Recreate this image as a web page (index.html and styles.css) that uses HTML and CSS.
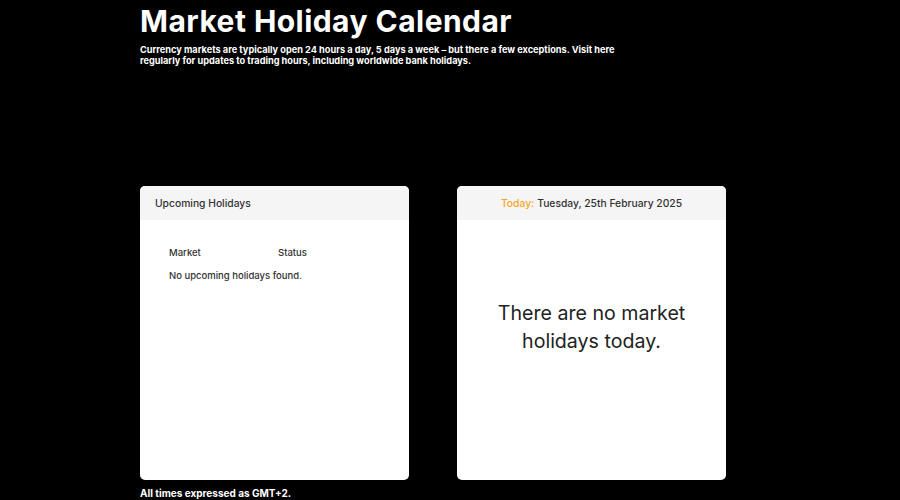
FILE: index.html
```html
<!DOCTYPE html>
<html lang="en">
<head>
<meta charset="utf-8">
<title>Market Holiday Calendar</title>
<link rel="stylesheet" href="styles.css">
</head>
<body>
<main class="page">
  <header class="intro">
    <h1 class="title">Market Holiday Calendar</h1>
    <p class="lead">Currency markets are typically open 24 hours a day, 5 days a week – but there a few exceptions. Visit here regularly for updates to trading hours, including worldwide bank holidays.</p>
  </header>
  <section class="cards">
    <div class="card">
      <div class="card-head">Upcoming Holidays</div>
      <div class="card-body list-body">
        <div class="cols">
          <span class="col-market">Market</span>
          <span class="col-status">Status</span>
        </div>
        <p class="empty">No upcoming holidays found.</p>
      </div>
    </div>
    <div class="card">
      <div class="card-head centered"><span class="today">Today:</span> Tuesday, 25th February 2025</div>
      <div class="card-body today-body">
        <p class="none">There are no market<br>holidays today.</p>
      </div>
    </div>
  </section>
  <p class="note">All times expressed as GMT+2.</p>
</main>
</body>
</html>
```
FILE: styles.css
```css
html, body {
  margin: 0;
  padding: 0;
  background: #000;
}
body {
  font-family: Inter, "Open Sans", "Liberation Sans", sans-serif;
  color: #fff;
  overflow: hidden;
}
.page {
  width: 586px;
  margin-left: 140px;
}
.intro {
  padding-top: 3px;
}
.title {
  margin: 0;
  font-size: 30px;
  line-height: 36px;
  font-weight: 700;
  letter-spacing: 0.45px;
}
.lead {
  margin: 5px 0 0;
  width: 480px;
  font-size: 9.2px;
  line-height: 11px;
  font-weight: 700;
}
.cards {
  display: flex;
  gap: 48px;
  margin-top: 120px;
}
.card {
  width: 269px;
  height: 294px;
  background: #fff;
  border-radius: 5px;
  overflow: hidden;
  color: #222;
  display: flex;
  flex-direction: column;
}
.card-head {
  height: 34px;
  background: #f5f5f5;
  display: flex;
  align-items: center;
  padding-left: 15px;
  font-size: 10.3px;
  font-weight: 500;
  color: #333;
}
.card-head.centered {
  justify-content: center;
  padding-left: 0;
}
.today {
  color: #f5a623;
  margin-right: 3px;
}
.list-body {
  padding: 27px 29px 0;
  font-size: 9.5px;
  font-weight: 500;
  color: #333;
}
.cols {
  display: flex;
}
.col-market {
  width: 109px;
}
.empty {
  margin: 12px 0 0;
}
.today-body {
  flex: 1;
  display: flex;
  align-items: center;
  justify-content: center;
  padding-bottom: 46px;
}
.none {
  margin: 0;
  text-align: center;
  font-size: 19.6px;
  line-height: 28px;
  color: #222;
}
.note {
  margin: 7px 0 0;
  font-size: 10px;
  font-weight: 700;
}
```
